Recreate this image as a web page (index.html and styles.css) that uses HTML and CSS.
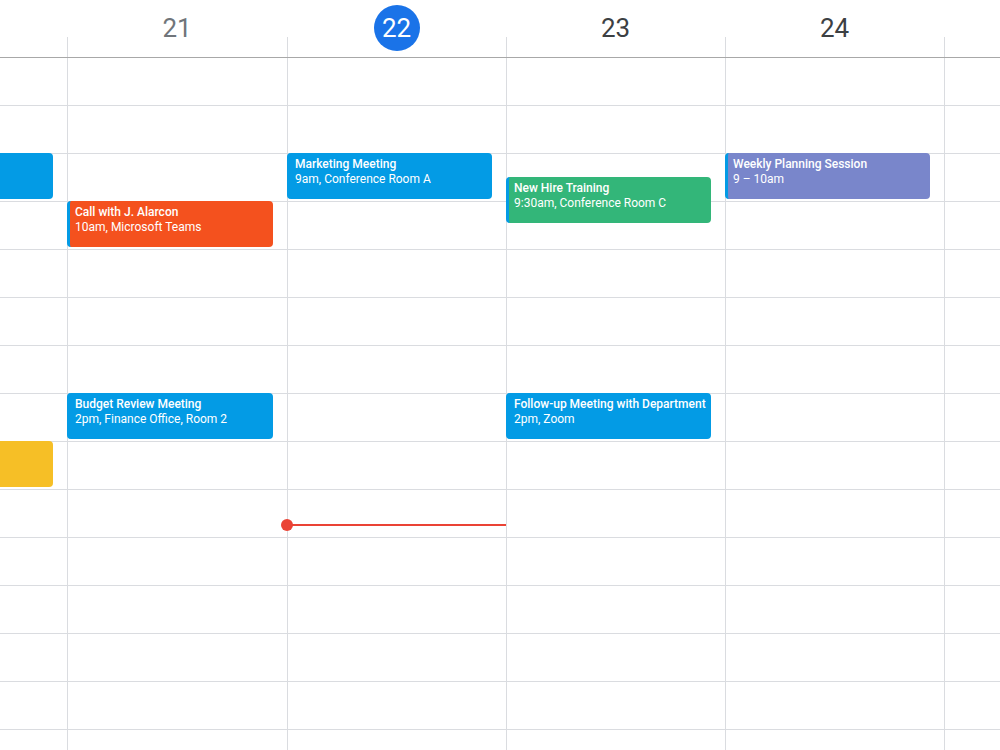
FILE: index.html
```html
<!DOCTYPE html>
<html lang="en">
<head>
  <meta charset="UTF-8">
  <meta name="viewport" content="width=device-width, initial-scale=1.0">
  <title>Week view</title>
  <link rel="stylesheet" href="styles.css">
</head>
<body>
  <div class="calendar">
    <div class="week-head">
      <div class="day-head first"></div>
      <div class="day-head past">
        <div class="day-num"><span>21</span></div>
        <div class="day-tick"></div>
      </div>
      <div class="day-head today">
        <div class="day-num"><span>22</span></div>
        <div class="day-tick"></div>
      </div>
      <div class="day-head">
        <div class="day-num"><span>23</span></div>
        <div class="day-tick"></div>
      </div>
      <div class="day-head">
        <div class="day-num"><span>24</span></div>
        <div class="day-tick"></div>
      </div>
      <div class="day-head">
        <div class="day-num"><span></span></div>
        <div class="day-tick"></div>
      </div>
    </div>

    <div class="week-body">
      <div class="day-col first">
        <div class="slot"></div><div class="slot"></div><div class="slot"></div><div class="slot"></div><div class="slot"></div>
        <div class="slot"></div><div class="slot"></div><div class="slot"></div><div class="slot"></div><div class="slot"></div>
        <div class="slot"></div><div class="slot"></div><div class="slot"></div><div class="slot"></div><div class="slot"></div>
        <div class="event peacock plain" style="top: 95px;"></div>
        <div class="event banana plain" style="top: 383px;"></div>
      </div>

      <div class="day-col">
        <div class="slot"></div><div class="slot"></div><div class="slot"></div><div class="slot"></div><div class="slot"></div>
        <div class="slot"></div><div class="slot"></div><div class="slot"></div><div class="slot"></div><div class="slot"></div>
        <div class="slot"></div><div class="slot"></div><div class="slot"></div><div class="slot"></div><div class="slot"></div>
        <div class="event tangerine" style="top: 143px;">
          <p class="event-title">Call with J. Alarcon</p>
          <p class="event-meta">10am, Microsoft Teams</p>
        </div>
        <div class="event peacock" style="top: 335px;">
          <p class="event-title">Budget Review Meeting</p>
          <p class="event-meta">2pm, Finance Office, Room 2</p>
        </div>
      </div>

      <div class="day-col">
        <div class="slot"></div><div class="slot"></div><div class="slot"></div><div class="slot"></div><div class="slot"></div>
        <div class="slot"></div><div class="slot"></div><div class="slot"></div><div class="slot"></div><div class="slot"></div>
        <div class="slot"></div><div class="slot"></div><div class="slot"></div><div class="slot"></div><div class="slot"></div>
        <div class="event peacock" style="top: 95px;">
          <p class="event-title">Marketing Meeting</p>
          <p class="event-meta">9am, Conference Room A</p>
        </div>
        <div class="now-line" style="top: 466px;"></div>
      </div>

      <div class="day-col">
        <div class="slot"></div><div class="slot"></div><div class="slot"></div><div class="slot"></div><div class="slot"></div>
        <div class="slot"></div><div class="slot"></div><div class="slot"></div><div class="slot"></div><div class="slot"></div>
        <div class="slot"></div><div class="slot"></div><div class="slot"></div><div class="slot"></div><div class="slot"></div>
        <div class="event sage" style="top: 119px;">
          <p class="event-title">New Hire Training</p>
          <p class="event-meta">9:30am, Conference Room C</p>
        </div>
        <div class="event peacock" style="top: 335px;">
          <p class="event-title">Follow-up Meeting with Department</p>
          <p class="event-meta">2pm, Zoom</p>
        </div>
      </div>

      <div class="day-col">
        <div class="slot"></div><div class="slot"></div><div class="slot"></div><div class="slot"></div><div class="slot"></div>
        <div class="slot"></div><div class="slot"></div><div class="slot"></div><div class="slot"></div><div class="slot"></div>
        <div class="slot"></div><div class="slot"></div><div class="slot"></div><div class="slot"></div><div class="slot"></div>
        <div class="event lavender" style="top: 95px;">
          <p class="event-title">Weekly Planning Session</p>
          <p class="event-meta">9 – 10am</p>
        </div>
      </div>

      <div class="day-col">
        <div class="slot"></div><div class="slot"></div><div class="slot"></div><div class="slot"></div><div class="slot"></div>
        <div class="slot"></div><div class="slot"></div><div class="slot"></div><div class="slot"></div><div class="slot"></div>
        <div class="slot"></div><div class="slot"></div><div class="slot"></div><div class="slot"></div><div class="slot"></div>
      </div>
    </div>
  </div>
</body>
</html>
```

FILE: styles.css
```css
* {
  margin: 0;
  padding: 0;
  box-sizing: border-box;
}

body {
  font-family: 'Roboto', 'Liberation Sans', sans-serif;
  background: #fff;
  overflow: hidden;
  height: 750px;
}

.calendar {
  width: 1000px;
}

.week-head,
.week-body {
  display: grid;
  grid-template-columns: 67px 220px 219px 219px 219px 1fr;
}

.week-head {
  height: 58px;
  border-bottom: 1px solid #a8a8a8;
}

.day-head {
  display: flex;
  flex-direction: column;
}

.day-num {
  height: 37px;
  padding-top: 5px;
  display: flex;
  justify-content: center;
}

.day-num span {
  display: block;
  min-width: 46px;
  height: 46px;
  line-height: 46px;
  text-align: center;
  font-size: 26px;
  color: #3c4043;
}

.day-head.past .day-num span {
  color: #70757a;
}

.day-head.today .day-num span {
  background: #1a73e8;
  color: #fff;
  border-radius: 50%;
}

.day-tick {
  flex: 1;
  border-left: 1px solid #dadce0;
}

.day-head.first .day-tick {
  border-left: none;
}

.day-col {
  position: relative;
  border-left: 1px solid #dadce0;
}

.day-col.first {
  border-left: none;
}

.slot {
  height: 48px;
  border-bottom: 1px solid #dadce0;
}

.event {
  position: absolute;
  left: -1px;
  right: 14px;
  height: 46px;
  padding: 4px 8px 0 5px;
  border-left: 3px solid #039be5;
  border-radius: 4px;
  color: #fff;
  font-size: 12px;
  line-height: 15px;
  overflow: hidden;
  white-space: nowrap;
}

.event.plain {
  left: 0;
  border-left: none;
  border-radius: 0 4px 4px 0;
}

.event-title {
  font-weight: 500;
}

.peacock {
  background: #039be5;
}

.tangerine {
  background: #f4511e;
}

.sage {
  background: #33b679;
}

.lavender {
  background: #7986cb;
}

.banana {
  background: #f6bf26;
}

.now-line {
  position: absolute;
  left: -1px;
  right: 0;
  height: 2px;
  background: #ea4335;
}

.now-line::before {
  content: '';
  position: absolute;
  left: -6px;
  top: -5px;
  width: 12px;
  height: 12px;
  border-radius: 50%;
  background: #ea4335;
}
```
